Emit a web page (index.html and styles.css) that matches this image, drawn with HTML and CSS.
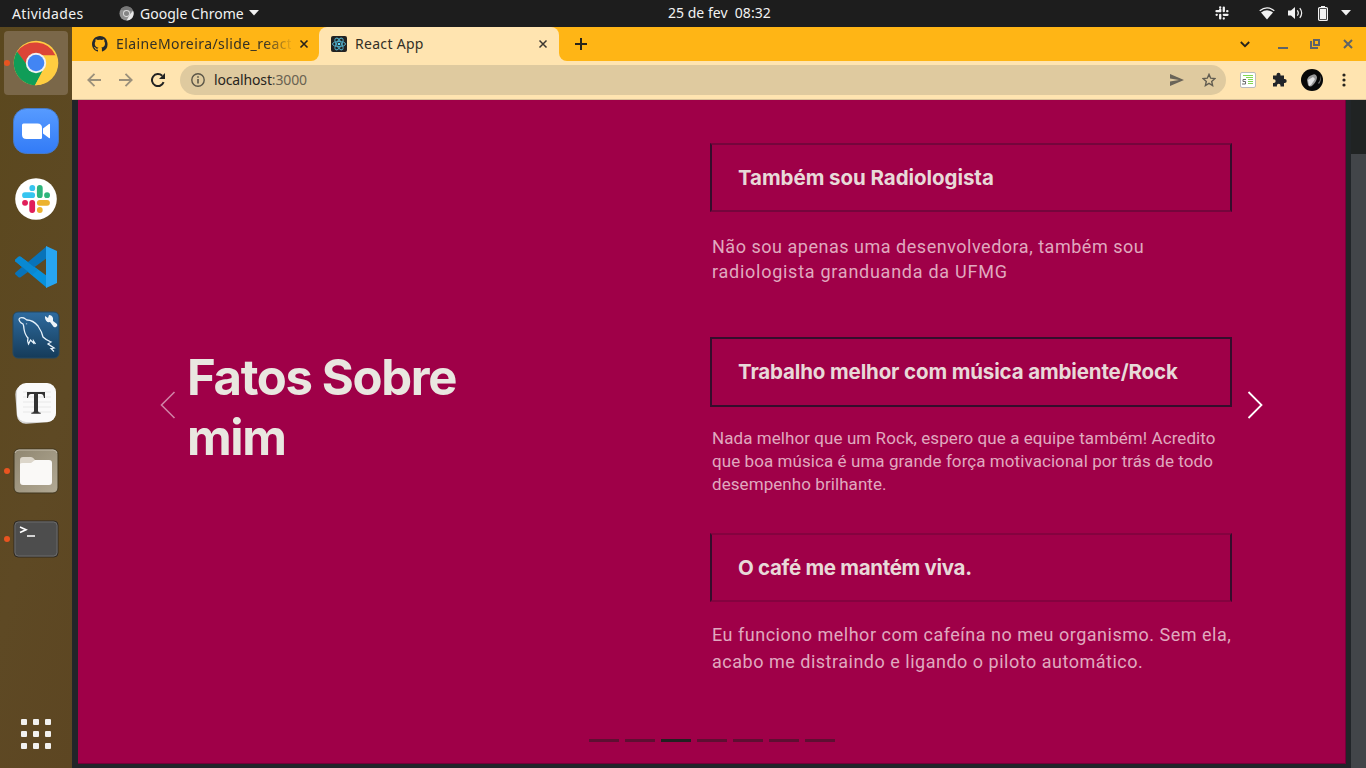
FILE: index.html
```html
<!DOCTYPE html>
<html lang="pt-BR">
<head>
<meta charset="utf-8">
<title>React App</title>
<link rel="stylesheet" href="styles.css">
</head>
<body>
<header class="topbar">
  <span class="activities">Atividades</span>
  <svg class="app-icon" width="15" height="15" viewBox="0 0 16 16"><circle cx="8" cy="8" r="7.5" fill="#919191"/><path d="M1.5 4A7.5 7.5 0 0 1 15 5H8z" fill="#777"/><path d="M15 5A7.5 7.5 0 0 1 8 15.5l4-7z" fill="#e8e8e8"/><circle cx="8" cy="8" r="3.7" fill="#ddd"/><circle cx="8" cy="8" r="2.7" fill="#858585"/></svg>
  <span class="app-name">Google Chrome</span>
  <svg class="app-caret" width="10" height="6"><path d="M0 0H10L5 5.5z" fill="#f2f2f2"/></svg>
  <span class="clock">25 de fev&nbsp; 08:32</span>
  <div class="tray">
    <svg width="14" height="14" viewBox="0 0 14 14" stroke="#f2f2f2" stroke-width="2.3" stroke-linecap="round"><path d="M5.2 3.600v1.700M5.200 1.400v.1M1.500 5.200h3.800M8.800 1.600v3.600M12.400 5.200h-.2M8.800 12.500v-.1M12.500 8.800H8.800M5.200 12.400V8.800M1.600 8.800h.2"/></svg>
    <svg class="wifi" width="16" height="13" viewBox="0 0 16 13"><path d="M.7 3.8Q8-2 15.3 3.8" fill="none" stroke="#f2f2f2" stroke-width="1.2"/><path d="M2 5.4Q8 1 14 5.4L8 12.5z" fill="#f2f2f2"/></svg>
    <svg class="volume" width="15" height="14" viewBox="0 0 15 14"><path d="M0 4.5h3L7 1v12L3 9.5H0z" fill="#f2f2f2"/><path d="M9.3 4.3q2 2.7 0 5.4M11.8 2.2q3.7 4.8 0 9.6" fill="none" stroke="#f2f2f2" stroke-width="1.2"/></svg>
    <svg class="battery" width="10" height="15" viewBox="0 0 10 15"><path d="M3 0h4v2H3z" fill="#f2f2f2"/><rect x=".6" y="1.6" width="8.8" height="12.8" rx="1" fill="none" stroke="#f2f2f2" stroke-width="1.2"/><path d="M2 3h6v10H2z" fill="#f2f2f2"/></svg>
    <svg class="menu-caret" width="10" height="6"><path d="M0 0H10L5 5.5z" fill="#f2f2f2"/></svg>
  </div>
</header>
<div class="desktop">
  <nav class="dock">
    <div class="dock-item active running">
      <svg width="46" height="46" viewBox="0 0 46 46"><circle cx="23" cy="23" r="22.3" fill="#fc4"/><path d="M4 12A22.3 22.3 0 0 1 42.5 15.5H23L15 27z" fill="#dc4437"/><path d="M4 11.5A22.3 22.3 0 0 0 22 45.3L31 29 17 29z" fill="#109d58"/><path d="M23 15.5H42.5A22.3 22.3 0 0 1 22 45.3L30.5 29z" fill="#ffcd40"/><circle cx="23" cy="23" r="10.2" fill="#f1f1f1"/><circle cx="23" cy="23" r="8.3" fill="#4285f4"/></svg>
    </div>
    <div class="dock-item">
      <svg width="46" height="46" viewBox="0 0 46 46"><defs><linearGradient id="zoom" x2="0" y2="1"><stop stop-color="#579bff"/><stop offset="1" stop-color="#327bf7"/></linearGradient></defs><rect x=".5" y=".5" width="45" height="45" rx="13" fill="url(#zoom)" stroke="#477ac6"/><path d="M9 17q0-1.500 1.500-1.500h14q4.500 0 4.500 4.500v9.500q0 1.500-1.500 1.500h-14Q9 31 9 26.500z" fill="#fff"/><path d="M30 20.500l6-4.500q1-.7 1 .5v13q0 1.200-1 .5l-6-4.500z" fill="#fff"/></svg>
    </div>
    <div class="dock-item">
      <svg width="42" height="42" viewBox="0 0 42 42"><circle cx="21" cy="21" r="20.800" fill="#fff"/><g stroke-width="5.800" stroke-linecap="round"><path d="M10 17.200h7.200M17.300 10v.2" stroke="#36c5f0"/><path d="M24.800 10v7.200M32 17.200h.1" stroke="#2eb67d"/><path d="M24.800 24.800H32M24.800 32v.1" stroke="#ecb22e"/><path d="M17.200 24.800V32M10 24.800h.1" stroke="#e01e5a"/></g></svg>
    </div>
    <div class="dock-item">
      <svg width="44" height="44" viewBox="0 0 44 44"><path d="M1.500 14.500l3-2.700q1-.8 2.200 0L33 31v12L1.500 16.500q-.9-1 0-2z" fill="#0791dc"/><path d="M1.500 29.500l3 2.700q1 .8 2.200 0L33 13V1L1.500 27.500q-.9 1 0 2z" fill="#0873b9"/><path d="M1.500 14.500l3-2.700q1-.8 2.200 0L24 25 18 30 1.500 16.500q-.9-1 0-2z" fill="#0989d2"/><path d="M32 1l11 5v32l-11 5z" fill="#27a5f1"/></svg>
    </div>
    <div class="dock-item">
      <svg width="48" height="48" viewBox="0 0 48 48"><defs><linearGradient id="sql" x2="0" y2="1"><stop stop-color="#2e6b9f"/><stop offset="1" stop-color="#153b59"/></linearGradient></defs><rect x="1" y="1" width="46" height="46" rx="5" fill="url(#sql)" stroke="#244862"/><path d="M7 8q1-2 5-1l3 2q6 0 11 6 4 6 5 11 3 3 8 5l-3 2 6 4-3 .5 3 3M7 8q0 3 4 5 1 2 1 5 1 6 4 9-1 3 .5 6l2-4 3 3v-2l2 3M14.500 12.500v.8" fill="none" stroke="#e7f2fb" stroke-width="1.300"/><path d="M33 5l3 2 1-3q3 0 4 3v3l4 3q1 2-1 3t-3-1l-3-4q-4 1-5-4z" fill="#eef5fa"/></svg>
    </div>
    <div class="dock-item">
      <svg width="44" height="44" viewBox="0 0 44 44"><rect x="2" y="3" width="39" height="39" rx="9" fill="#d8d8d8" transform="rotate(-4 22 22)"/><rect x="3" y="2" width="39" height="39" rx="9" fill="#fafafa"/><path d="M9 11h28M9 16h28M9 21h28M9 26h28M9 31h28" stroke="#e8e8e8"/><path d="M13 11h18v6h-1q-.500-4-3-4h-3v17q0 1.700 2.700 1.800v1H17.300v-1q2.700-.1 2.700-1.800V13h-3q-2.500 0-3 4h-1z" fill="#333"/></svg>
    </div>
    <div class="dock-item running">
      <svg width="46" height="46" viewBox="0 0 46 46"><defs><linearGradient id="files" x2="1" y2="1"><stop stop-color="#8f8670"/><stop offset="1" stop-color="#b2a994"/></linearGradient></defs><rect x="1" y="1" width="44" height="44" rx="5" fill="url(#files)" stroke="#40361f"/><path d="M2 5q1-3 4-3h34q3 0 4 3" fill="none" stroke="#c1b9a8"/><path d="M7 18v-6q0-3 3-3h8q2 0 4 3h14v8H7z" fill="#dcd6ca"/><path d="M7 16q0-1 3-1h8l4-3h14q3 0 3 3v19q0 3-3 3H10q-3 0-3-3z" fill="#faf9f7"/></svg>
    </div>
    <div class="dock-item running">
      <svg width="46" height="38" viewBox="0 0 46 38"><rect x="1" y="1" width="44" height="36" rx="4" fill="#4d4d4d" stroke="#302a21"/><rect x="2" y="2" width="42" height="34" rx="3.500" fill="none" stroke="#6b6b6b"/><path d="M7 7l6 2.700-6 2.700M14 16h8" fill="none" stroke="#fff" stroke-width="1.600"/></svg>
    </div>
    <div class="app-grid"><i></i><i></i><i></i><i></i><i></i><i></i><i></i><i></i><i></i></div>
  </nav>
  <main class="browser">
    <div class="tabs">
      <div class="tab tab-github">
        <svg width="16" height="16" viewBox="0 0 16 16"><path fill="#24292f" d="M8 0C3.600 0 0 3.600 0 8c0 3.500 2.300 6.500 5.500 7.600.4.100.5-.2.500-.4v-1.500c-2 .4-2.700-.5-2.900-1-.1-.2-.5-1-.8-1.100-.3-.2-.7-.6 0-.6.600 0 1.100.6 1.200.8.700 1.200 1.900.9 2.400.7.100-.5.300-.9.500-1.100-1.800-.2-3.600-.9-3.600-4 0-.9.300-1.600.8-2.100-.1-.2-.4-1 .1-2.100 0 0 .7-.2 2.200.8a7.600 7.600 0 0 1 4 0c1.500-1 2.200-.8 2.200-.8.400 1.100.2 1.900.1 2.100.5.600.8 1.300.8 2.100 0 3.100-1.900 3.700-3.600 3.900.3.300.5.700.5 1.500v2.200c0 .2.200.5.600.4A8 8 0 0 0 8 0"/></svg>
        <span class="tab-label fade">ElaineMoreira/slide_react</span>
        <svg class="close" width="10" height="10"><path d="M1.500 1.500l7 7m0-7l-7 7" stroke="#26221a" stroke-width="1.600"/></svg>
      </div>
      <div class="tab tab-react">
        <svg width="16" height="16" viewBox="0 0 16 16"><rect width="16" height="16" rx="2" fill="#222"/><g fill="none" stroke="#4fa9c4"><ellipse cx="8" cy="8" rx="6.500" ry="2.600"/><ellipse cx="8" cy="8" rx="6.500" ry="2.600" transform="rotate(60 8 8)"/><ellipse cx="8" cy="8" rx="6.500" ry="2.600" transform="rotate(120 8 8)"/></g><circle cx="8" cy="8" r="1.300" fill="#61dafb"/></svg>
        <span class="tab-label">React App</span>
        <svg class="close" width="10" height="10"><path d="M1.500 1.500l7 7m0-7l-7 7" stroke="#3c3730" stroke-width="1.500"/></svg>
      </div>
      <div class="tab-rest">
        <svg width="12" height="12"><path d="M6 0v12M0 6h12" stroke="#28241a" stroke-width="2"/></svg>
        <svg class="search-tabs" width="10" height="7"><path d="M.8 1L5 5.200 9.200 1" fill="none" stroke="#26221a" stroke-width="1.800"/></svg>
        <svg class="minimize" width="10" height="12"><path d="M0 10h10" stroke="#5f6368" stroke-width="2"/></svg>
        <svg class="restore" width="10" height="10"><path d="M4 1h5v5H4zM1 2v7h7" fill="none" stroke="#5f6368" stroke-width="2"/></svg>
        <svg class="win-close" width="10" height="10"><path d="M1 1l8 8m0-8L1 9" stroke="#5f6368" stroke-width="2"/></svg>
      </div>
    </div>
    <div class="toolbar">
      <svg class="nav" width="14" height="14"><path d="M14 7H1.500M7.500 .800L1.300 7l6.200 6.200" fill="none" stroke="#9b907b" stroke-width="1.800"/></svg>
      <svg class="nav" width="14" height="14"><path d="M0 7h12.500M6.500 .800L12.700 7l-6.200 6.200" fill="none" stroke="#9b907b" stroke-width="1.800"/></svg>
      <svg class="reload" width="14" height="14"><path d="M12.600 9.200A6 6 0 1 1 11.200 2.800" fill="none" stroke="#222" stroke-width="2"/><path d="M14 0v6H8z" fill="#222"/></svg>
      <div class="address">
        <svg width="14" height="14"><circle cx="7" cy="7" r="6.200" fill="none" stroke="#5b5647" stroke-width="1.400"/><path d="M7 6v4.500M7 3.200v1.600" stroke="#5b5647" stroke-width="1.600"/></svg>
        <span class="url">localhost<span class="port">:3000</span></span>
        <svg class="send" width="14" height="12"><path d="M0 0l14 6-14 6V7.500L9 6 0 4.500z" fill="#6a6458"/></svg>
        <svg width="14" height="14" viewBox="0 0 14 14"><path d="M7 1.400l1.700 3.800 4.200.4-3.200 2.800.9 4.100L7 10.300l-3.600 2.200.9-4.100L1.100 5.600l4.200-.4z" fill="none" stroke="#625d51" stroke-width="1.400"/></svg>
      </div>
      <svg class="extension" width="16" height="16"><rect x=".5" y=".5" width="15" height="15" rx="1.500" fill="#fff" stroke="#bbb"/><path d="M3 3.500h10M6 5.500h7M8 7.500h5M8 9.500h5M8 11.500h5" stroke="#83d852" /><path d="M6 7.500H3v2h2.500v2.500H2" fill="none" stroke="#6b6b6b"/></svg>
      <svg class="puzzle" width="15" height="15"><path d="M1 3.500h3.500V2.800a2 2 0 0 1 4 0v.7H12V7h.7a2 2 0 0 1 0 4H12v3.500H8.500v-1a1.800 1.800 0 0 0-3.600 0v1H1V10.900h.8a1.800 1.800 0 0 0 0-3.700H1z" fill="#222429"/></svg>
      <svg class="avatar" width="22" height="22"><circle cx="11" cy="11" r="11" fill="#080808"/><path d="M6 11q1-4 5-5 4-2 5 2 0 4-4 8-3 3-5 0z" fill="#999"/><path d="M7 11l5-3 2 2-4 6-2 1z" fill="#e2e2e2"/><path d="M17 14q3-3 2-8 2 5-1 9z" fill="#777"/></svg>
      <svg class="more" width="4" height="14" fill="#29261f"><circle cx="2" cy="2" r="1.600"/><circle cx="2" cy="7" r="1.600"/><circle cx="2" cy="12" r="1.600"/></svg>
    </div>
    <div class="page">
      <section class="slide">
        <h1 class="title">Fatos Sobre<br>mim</h1>
        <div class="facts">
          <article class="fact fact-one"><h2><span>Também sou Radiologista</span></h2><p>Não sou apenas uma desenvolvedora, também sou<br><span class="second-line">radiologista granduanda da UFMG</span></p></article>
          <article class="fact fact-two"><h2><span>Trabalho melhor com música ambiente/Rock</span></h2><p>Nada melhor que um Rock, espero que a equipe também! Acredito<br>que boa música é uma grande força motivacional por trás de todo<br>desempenho brilhante.</p></article>
          <article class="fact fact-three"><h2><span>O café me mantém viva.</span></h2><p>Eu funciono melhor com cafeína no meu organismo. Sem ela,<br>acabo me distraindo e ligando o piloto automático.</p></article>
        </div>
        <svg class="arrow prev" width="16" height="28"><path d="M14.500 1L1.500 14l13 13" fill="none" stroke="#fff" stroke-width="1.600"/></svg>
        <svg class="arrow next" width="16" height="28"><path d="M1.500 1l13 13-13 13" fill="none" stroke="#fff" stroke-width="1.800"/></svg>
        <div class="indicators"><i></i><i></i><i class="current"></i><i></i><i></i><i></i><i></i></div>
      </section>
      <div class="scrollbar"><div class="thumb"></div></div>
    </div>
  </main>
</div>
</body>
</html>
```
FILE: styles.css
```css
* { box-sizing: border-box; }
body { margin: 0; width: 1366px; height: 768px; overflow: hidden; font-family: "Noto Sans", sans-serif; font-size: 14px; }
svg { display: block; flex: none; }
i { display: block; }

.topbar { position: relative; display: flex; align-items: center; height: 27px; padding: 0 0 1px 12px; background: #1d1d1d; color: #f2f2f2; white-space: nowrap; }
.activities { width: 107px; letter-spacing: .35px; }
.app-name { width: 104px; margin-left: 6px; letter-spacing: .03px; }
.app-caret { margin-left: 5px; }
.clock { position: absolute; left: 668px; top: 3px; letter-spacing: .02px; }
.tray { display: flex; align-items: center; margin-left: auto; padding-right: 15px; }
.wifi { margin-left: 30px; }
.volume { margin-left: 13px; }
.battery { margin-left: 15px; }
.menu-caret { margin-left: 13px; }

.desktop { display: flex; height: 741px; }
.dock { display: flex; flex-direction: column; align-items: center; gap: 4px; width: 72px; padding-top: 4px; background: linear-gradient(105deg, #5b481e, #5e4924 60%, #5d4622); }
.dock-item { position: relative; display: grid; place-items: center; width: 64px; height: 64px; border-radius: 4px; }
.active { background: #7a6749; }
.running::before { content: ""; position: absolute; left: 0; top: 29px; width: 6px; height: 6px; border-radius: 50%; background: #e95420; }
.app-grid { display: grid; grid-template-columns: repeat(3, 6px); gap: 6px; margin-top: auto; padding-bottom: 19px; }
.app-grid i { height: 6px; border-radius: 1px; background: #f2f1ef; }

.browser { width: 1294px; }
.tabs { position: relative; z-index: 0; display: flex; height: 34px; background: #ffe4b0; }
.tab { display: flex; align-items: center; color: #333026; }
.tab-github { width: 247px; padding-left: 20px; background: #ffb515; border-bottom-right-radius: 8px; }
.tab-react { position: relative; width: 240px; padding-left: 12px; border-radius: 8px 8px 0 0; background: #ffe4b0; }
.tab-react::before { content: ""; position: absolute; z-index: -1; left: 0; top: 0; width: 240px; height: 10px; background: #ffb515; }
.tab-label { margin-left: 8px; padding-bottom: 2px; white-space: nowrap; overflow: hidden; }
.tab-react .tab-label { width: 183px; letter-spacing: .3px; }
.fade { width: 175px; letter-spacing: .42px; -webkit-mask-image: linear-gradient(90deg, #000 148px, transparent 178px); mask-image: linear-gradient(90deg, #000 148px, transparent 178px); }
.close { margin-left: 8px; }
.tab-react .close { margin-left: 0; }
.tab-rest { display: flex; align-items: center; flex: 1; padding: 0 13px 0 16px; background: #ffb515; border-bottom-left-radius: 8px; }
.search-tabs { margin-left: auto; }
.minimize { margin-left: 28px; }
.restore { margin-left: 22px; }
.win-close { margin-left: 23px; }
.toolbar { display: flex; align-items: center; height: 39px; padding: 0 19px 1px 15px; background: #ffe4b0; border-bottom: 1px solid #d6bf98; }
.nav { margin-right: 18px; }
.reload { margin-right: 15px; }
.address { display: flex; flex: none; align-items: center; width: 1046px; height: 30px; padding: 0 10px 0 11px; border-radius: 15px; background: #dfca9f; }
.url { margin-left: 9px; color: #28251d; letter-spacing: -.15px; }
.port { color: #6a6251; }
.send { margin-left: auto; margin-right: 18px; }
.extension { margin-left: 14px; }
.puzzle { margin-left: 16px; }
.avatar { margin-left: 14px; }
.more { margin-left: 19px; }

.page { display: flex; justify-content: space-between; height: 668px; padding-left: 6px; background: #212529; }
.slide { position: relative; display: flex; width: 1268px; height: 664px; background: #9f0048; border-bottom: 1px solid #730039; border-right: 1px solid #730039; white-space: nowrap; }
.scrollbar { width: 15px; padding-top: 54px; background: #202323; }
.thumb { height: 614px; background: #424549; }
.title { width: 522px; margin: 248px 0 0 109px; color: #e9e7e0; font: 700 49px/60px Inter, sans-serif; letter-spacing: -1.35px; }
.facts { width: 522px; margin-left: 1px; padding-top: 43px; }
.fact { height: 195px; }
.fact h2 { display: flex; align-items: center; height: 69px; margin: 0 0 1px; padding: 1px 0 0 26px; border: 2px solid #350d2c; color: #e8d9d8; font: 700 20.5px/30px Inter, sans-serif; letter-spacing: -.06px; }
.fact p { margin: 0; padding-left: 2px; color: #e0a9bf; font-family: Roboto, sans-serif; font-size: 18px; }
.fact-one { height: 194px; }
.fact-one h2 { border-color: #75053c #350d2c; }
.fact-one p { padding-top: 21px; line-height: 25px; letter-spacing: .52px; }
.second-line { letter-spacing: .74px; }
.fact-two { height: 196px; }
.fact-two h2 { height: 70px; margin-bottom: 0; padding-top: 0; letter-spacing: -.14px; }
.fact-two p { padding-top: 20px; font-size: 17px; line-height: 23px; letter-spacing: .07px; }
.fact-three h2 { border-color: #85023f #350d2c; letter-spacing: -.31px; }
.fact-three p { padding-top: 18px; line-height: 27px; letter-spacing: .51px; }
.arrow { position: absolute; top: 291px; }
.prev { left: 82px; opacity: .5; }
.next { left: 1169px; }
.indicators { position: absolute; left: 511px; top: 639px; display: flex; gap: 6px; }
.indicators i { width: 30px; height: 3px; background: #5e0f32; }
.indicators .current { background: #212121; }
```
